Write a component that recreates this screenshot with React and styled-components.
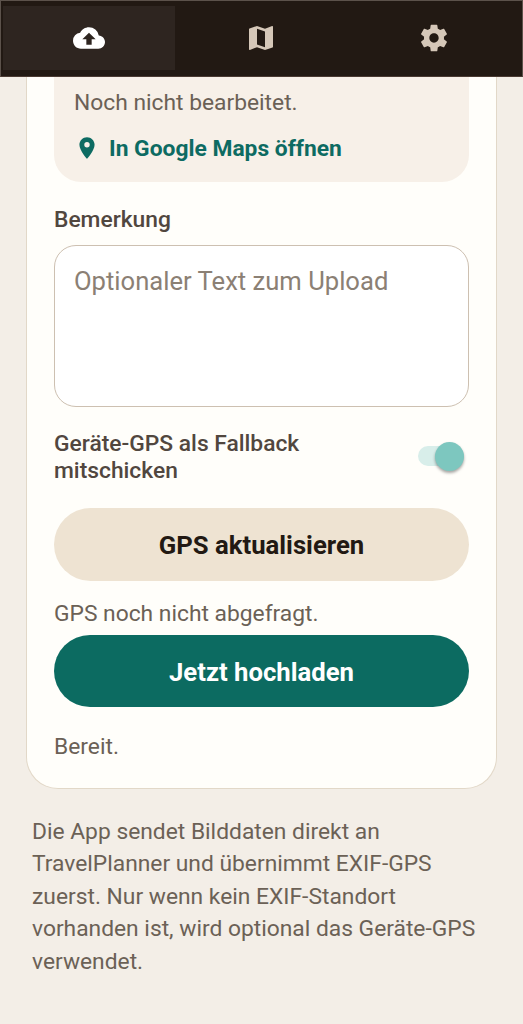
import React, { useState } from 'react';
import styled, { createGlobalStyle } from 'styled-components';
import { MdCloudUpload, MdMap, MdLocationOn } from 'react-icons/md';

const GlobalStyle = createGlobalStyle`
  * {
    box-sizing: border-box;
  }
  body {
    margin: 0;
    background: #f3eee7;
    font-family: Roboto, 'Liberation Sans', sans-serif;
    overflow: hidden;
  }
`
const Screen = styled.div`
  height: 1024px;
  display: flex;
  flex-direction: column;
  overflow: hidden;
`
const TabBar = styled.nav`
  flex: none;
  display: flex;
  height: 77px;
  padding: 5px 2px 6px;
  background: #221913;
  border: 1px solid #5c524b;
  border-bottom-color: #4a3a32;
`
const Tab = styled.button`
  flex: 1;
  display: flex;
  justify-content: center;
  align-items: center;
  padding: 0;
  border: none;
  background: ${props => props.$active ? '#2e2520' : 'none'};
  color: ${props => props.$active ? '#ffffff' : '#d5c7b8'};
`
const Content = styled.main`
  padding: 0 26px;
`
const Card = styled.section`
  display: flex;
  flex-direction: column;
  width: 471px;
  height: 712px;
  padding: 0 27px;
  background: #fffefa;
  border: 1px solid #e2d8c8;
  border-top: none;
  border-radius: 0 0 32px 32px;
`
const InfoBox = styled.div`
  height: 105px;
  padding: 12px 20px 0;
  background: #f7f0e8;
  border-radius: 0 0 27px 27px;
`
const Text = styled.p`
  margin: 0;
  font-size: 22.8px;
  line-height: 27px;
  color: #6b6156;
`
const MapsLink = styled.a`
  display: flex;
  align-items: center;
  gap: 9px;
  margin-top: 18px;
  font-size: 22.8px;
  font-weight: 700;
  line-height: 30px;
  color: #0d6b62;
`
const PinIcon = styled(MdLocationOn)`
  margin-bottom: 2px;
`
const Label = styled.label`
  font-size: 22.8px;
  font-weight: 500;
  line-height: 26.5px;
  color: #51473f;
`
const NoteLabel = styled(Label)`
  margin-top: 25px;
`
const NoteInput = styled.textarea`
  display: block;
  width: 100%;
  height: 162px;
  margin-top: 11.5px;
  padding: 20px 19px 18px;
  background: #ffffff;
  border: 1px solid #cdc0b1;
  border-radius: 22px;
  outline: none;
  resize: none;
  font-family: inherit;
  font-size: 25.6px;
  line-height: 31px;
  color: #221913;
  &::placeholder {
    color: #8b8074;
    opacity: 1;
  }
`
const SwitchRow = styled.div`
  display: flex;
  justify-content: space-between;
  align-items: center;
  height: 54px;
  margin-top: 23.5px;
  padding-right: 5px;
`
const SwitchLabel = styled(Label)`
  width: 300px;
`
const Track = styled.button`
  display: flex;
  justify-content: ${props => props.$on ? 'flex-end' : 'flex-start'};
  align-items: center;
  width: 46px;
  height: 20px;
  margin-bottom: 3px;
  padding: 0;
  border: none;
  border-radius: 10px;
  background: #d8eeea;
`
const Thumb = styled.span`
  flex: none;
  width: 29px;
  height: 29px;
  border-radius: 50%;
  background: #7dc7bf;
  box-shadow: 0 2px 3px rgba(0, 0, 0, 0.35);
`
const Button = styled.button`
  flex: none;
  height: 72.5px;
  margin-top: ${props => props.$gap}px;
  padding: 2px 0 0;
  border: none;
  border-radius: 37px;
  background: ${props => props.$primary ? '#0c6b61' : '#eee3d2'};
  color: ${props => props.$primary ? '#ffffff' : '#221913'};
  font-family: inherit;
  font-size: 25.7px;
  font-weight: 700;
`
const GpsStatus = styled(Text)`
  margin-top: 19.5px;
`
const UploadStatus = styled(Text)`
  margin-top: 25.5px;
`
const Hint = styled.p`
  width: 460px;
  margin: 27px 0 0 6px;
  font-size: 22.8px;
  line-height: 32.4px;
  color: #6b6156;
`

// gear with wide teeth, the one in react-icons is slimmer
const GearIcon = ({ size }) => (
  <svg width={size} height={size} viewBox="0 0 24 24" fill="currentColor">
    <path d="M19.43 12.98c.04-.32.07-.64.07-.98s-.03-.66-.07-.98l2.11-1.65c.19-.15.24-.42.12-.64l-2-3.46c-.12-.22-.39-.3-.61-.22l-2.49 1c-.52-.4-1.08-.73-1.69-.98l-.38-2.65C14.46 2.18 14.25 2 14 2h-4c-.25 0-.46.18-.49.42l-.38 2.65c-.61.25-1.17.59-1.69.98l-2.49-1c-.23-.09-.49 0-.61.22l-2 3.46c-.13.22-.07.49.12.64l2.11 1.65c-.04.32-.07.65-.07.98s.03.66.07.98l-2.11 1.65c-.19.15-.24.42-.12.64l2 3.46c.12.22.39.3.61.22l2.49-1c.52.4 1.08.73 1.69.98l.38 2.65c.03.24.24.42.49.42h4c.25 0 .46-.18.49-.42l.38-2.65c.61-.25 1.17-.59 1.69-.98l2.49 1c.23.09.49 0 .61-.22l2-3.46c.12-.22.07-.49-.12-.64l-2.11-1.65zM12 15.5c-1.93 0-3.5-1.57-3.5-3.5s1.57-3.5 3.5-3.5 3.5 1.57 3.5 3.5-1.57 3.5-3.5 3.5z" />
  </svg>
)

function App() {
  const [tab, setTab] = useState('upload');
  const [useGps, setUseGps] = useState(true);

  return (
    <Screen>
      <GlobalStyle />
      <TabBar>
        <Tab $active={tab === 'upload'} onClick={() => setTab('upload')}><MdCloudUpload size={32} /></Tab>
        <Tab $active={tab === 'map'} onClick={() => setTab('map')}><MdMap size={32} /></Tab>
        <Tab $active={tab === 'settings'} onClick={() => setTab('settings')}><GearIcon size={32} /></Tab>
      </TabBar>
      <Content>
        <Card>
          <InfoBox>
            <Text>Noch nicht bearbeitet.</Text>
            <MapsLink><PinIcon size={26} />In Google Maps öffnen</MapsLink>
          </InfoBox>
          <NoteLabel htmlFor="note">Bemerkung</NoteLabel>
          <NoteInput id="note" placeholder="Optionaler Text zum Upload" />
          <SwitchRow>
            <SwitchLabel>Geräte-GPS als Fallback mitschicken</SwitchLabel>
            <Track $on={useGps} onClick={() => setUseGps(!useGps)}><Thumb /></Track>
          </SwitchRow>
          <Button $gap={23.5}>GPS aktualisieren</Button>
          <GpsStatus>GPS noch nicht abgefragt.</GpsStatus>
          <Button $primary $gap={7.5}>Jetzt hochladen</Button>
          <UploadStatus>Bereit.</UploadStatus>
        </Card>
        <Hint>
          Die App sendet Bilddaten direkt an TravelPlanner und übernimmt EXIF-GPS zuerst. Nur wenn kein EXIF-Standort vorhanden ist, wird optional das Geräte-GPS verwendet.
        </Hint>
      </Content>
    </Screen>
  );
}

export default App;
